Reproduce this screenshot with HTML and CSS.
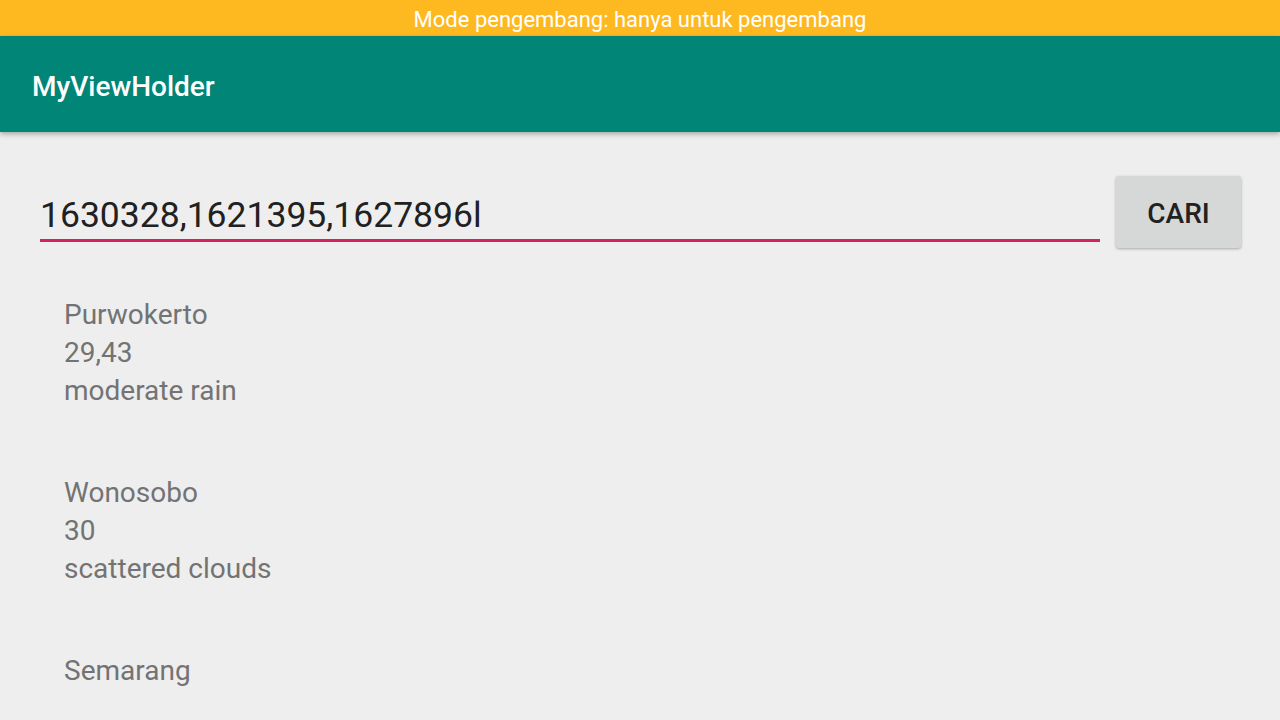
FILE: index.html
```html
<!DOCTYPE html>
<html>
<head>
<meta charset="utf-8">
<link rel="stylesheet" href="styles.css">
</head>
<body>
<div class="status">Mode pengembang: hanya untuk pengembang</div>
<header class="toolbar"><span class="title">MyViewHolder</span></header>
<main class="content">
  <div class="search-row">
    <div class="edit">1630328,1621395,1627896l</div>
    <button class="btn">CARI</button>
  </div>
  <div class="list">
    <div class="item">
      <div>Purwokerto</div>
      <div>29,43</div>
      <div>moderate rain</div>
    </div>
    <div class="item">
      <div>Wonosobo</div>
      <div>30</div>
      <div>scattered clouds</div>
    </div>
    <div class="item">
      <div>Semarang</div>
    </div>
  </div>
</main>
</body>
</html>
```

FILE: styles.css
```css
html, body {
  margin: 0;
  padding: 0;
  width: 1280px;
  height: 720px;
  overflow: hidden;
  background: #eeeeee;
  font-family: Roboto, "Noto Sans", sans-serif;
}
.status {
  height: 36px;
  background: #ffb920;
  color: #ffffff;
  font-size: 22px;
  line-height: 39px;
  text-align: center;
}
.toolbar {
  position: relative;
  z-index: 1;
  height: 96px;
  background: #008577;
  display: flex;
  align-items: center;
  padding-left: 32px;
  box-shadow: 0 2px 5px rgba(0,0,0,0.3);
}
.title {
  color: #ffffff;
  font-size: 28px;
  font-weight: 500;
  margin-top: 4px;
}
.content {
  padding: 44px 39px 0 40px;
}
.search-row {
  display: flex;
  align-items: flex-start;
  gap: 16px;
}
.edit {
  flex: 1;
  height: 63px;
  border-bottom: 3px solid #d2235f;
  font-size: 35.5px;
  line-height: 78px;
  color: #212121;
  box-sizing: content-box;
}
.btn {
  width: 125px;
  height: 72px;
  border: none;
  border-radius: 3px;
  background: #d6d7d7;
  box-shadow: 0 1px 3px rgba(0,0,0,0.3);
  font-family: Roboto, sans-serif;
  font-size: 28px;
  font-weight: 500;
  color: #212121;
  padding: 2px 0 0;
}
.list {
  padding-left: 24px;
  margin-top: 48px;
}
.item {
  color: #737373;
  font-size: 28px;
  line-height: 38px;
  padding-bottom: 64px;
}
```
